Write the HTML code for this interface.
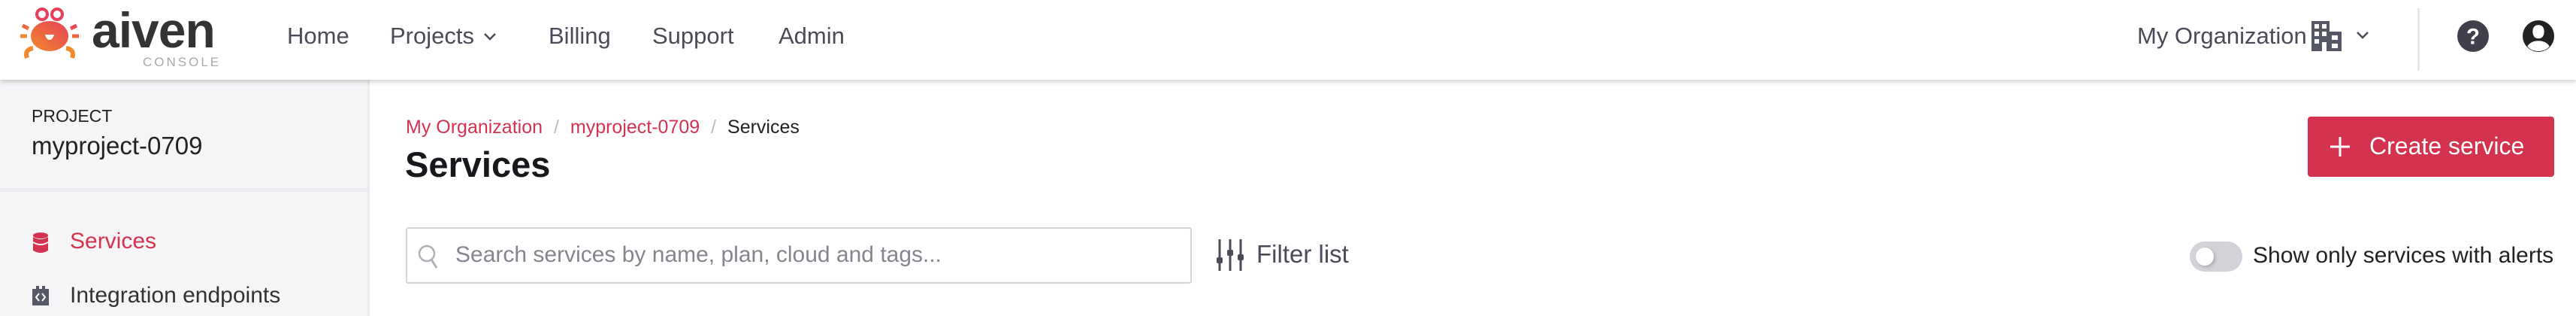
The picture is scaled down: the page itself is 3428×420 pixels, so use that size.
<!DOCTYPE html>
<html><head><meta charset="utf-8"><style>
*{margin:0;padding:0;box-sizing:border-box}
body{width:3428px;height:420px;overflow:hidden;background:#fff;font-family:"Liberation Sans",sans-serif;position:relative}
.a{position:absolute;white-space:nowrap}
.nav{font-size:31px;color:#4a4b57;top:30px}
</style></head><body>
<!-- header -->
<div class="a" style="left:0;top:0;width:3428px;height:106px;background:#fff;box-shadow:0 3px 6px rgba(0,0,0,.18);z-index:2">
 <svg class="a" style="left:26px;top:10px" width="84" height="68" viewBox="0 0 84 68">
  <defs><linearGradient id="g" x1="0" y1="1" x2="1" y2="0"><stop offset="0" stop-color="#f08a2c"/><stop offset="1" stop-color="#e8405a"/></linearGradient></defs>
  <circle cx="30" cy="9" r="7" fill="none" stroke="#e8405a" stroke-width="4"/>
  <circle cx="50" cy="9" r="7" fill="none" stroke="#e8405a" stroke-width="4"/>
  <ellipse cx="40" cy="38" rx="25" ry="20" fill="url(#g)"/>
  <path d="M34 36h12q-2 7-6 7t-6-7z" fill="#fff"/>
  <path d="M12 28l-8-4M10 38l-9 0M68 28l8-4M70 38l9 0" stroke="url(#g)" stroke-width="5"/>
  <path d="M18 54q-12 2-8 13M62 54q12 2 8 13" stroke="#f08a2c" stroke-width="6" fill="none"/>
 </svg>
 <div class="a" style="left:122px;top:2px;font-size:66px;font-weight:bold;color:#333;letter-spacing:-1px">aiven</div>
 <div class="a" style="left:190px;top:73px;font-size:17px;color:#aaa;letter-spacing:3px">CONSOLE</div>
 <div class="a nav" style="left:382px">Home</div>
 <div class="a nav" style="left:519px">Projects</div>
 <svg class="a" style="left:642px;top:42px" width="20" height="14"><path d="M3 3l7 7 7-7" stroke="#4a4b57" stroke-width="2.5" fill="none"/></svg>
 <div class="a nav" style="left:730px">Billing</div>
 <div class="a nav" style="left:868px">Support</div>
 <div class="a nav" style="left:1036px">Admin</div>
 <div class="a nav" style="left:2844px">My Organization</div>
 <svg class="a" style="left:3076px;top:28px" width="40" height="40" viewBox="0 0 40 40"><path d="M0 0h24v14h16v26H0z" fill="#565866"/><g fill="#fff"><rect x="4" y="4" width="6" height="6"/><rect x="14" y="4" width="6" height="6"/><rect x="4" y="14" width="6" height="6"/><rect x="14" y="14" width="6" height="6"/><rect x="4" y="24" width="6" height="6"/><rect x="27" y="19" width="8" height="6"/><rect x="27" y="30" width="8" height="6"/><rect x="14" y="28" width="6" height="12"/></g></svg>
 <svg class="a" style="left:3134px;top:40px" width="20" height="14"><path d="M3 3l7 7 7-7" stroke="#4a4b57" stroke-width="2.5" fill="none"/></svg>
 <div class="a" style="left:3217px;top:11px;width:3px;height:83px;background:#e6e6ea"></div>
 <svg class="a" style="left:3270px;top:27px" width="42" height="42" viewBox="0 0 40 40"><circle cx="20" cy="20" r="20" fill="#3f404b"/><text x="20" y="30" text-anchor="middle" font-family="Liberation Sans" font-weight="bold" font-size="28" fill="#fff">?</text></svg>
 <svg class="a" style="left:3357px;top:27px" width="42" height="42" viewBox="0 0 40 40"><circle cx="20" cy="20" r="20" fill="#222"/><path d="M20 6c-6 0-8 5-7 11 1 4 3 6 7 6s6-2 7-6c1-6-1-11-7-11zM6 33c3-5 8-7 14-7s11 2 14 7c-3 4-8 6-14 6S9 37 6 33z" fill="#fff"/></svg>
</div>
<!-- sidebar -->
<div class="a" style="left:0;top:106px;width:492px;height:314px;background:#f5f5f8;border-right:3px solid #ececf0"></div>
<div class="a" style="left:0;top:250px;width:492px;height:5px;background:#ececf0"></div>
<div class="a" style="left:42px;top:141px;font-size:23px;color:#222">PROJECT</div>
<div class="a" style="left:42px;top:175px;font-size:33px;color:#222">myproject-0709</div>
<svg class="a" style="left:43px;top:309px" width="22" height="28" viewBox="0 0 22 28"><ellipse cx="11" cy="4" rx="10" ry="4" fill="#d3334f"/><path d="M1 6q10 6 20 0v6q-10 6-20 0zM1 14q10 6 20 0v10q-10 6-20 0z" fill="#d3334f"/></svg>
<div class="a" style="left:93px;top:304px;font-size:30px;color:#d3334f">Services</div>
<svg class="a" style="left:43px;top:380px" width="22" height="26" viewBox="0 0 22 26"><path d="M0 4h5V0h4v4h4V0h4v4h5v22H0z" fill="#565866"/><path d="M9 10l-4 5 4 5M13 10l4 5-4 5" stroke="#fff" stroke-width="2" fill="none"/></svg>
<div class="a" style="left:93px;top:376px;font-size:30px;color:#333">Integration endpoints</div>
<!-- content -->
<div class="a" style="left:540px;top:155px;font-size:25px;color:#d3334f">My Organization <span style="color:#bbb;margin:0 8px">/</span> myproject-0709 <span style="color:#bbb;margin:0 8px">/</span> <span style="color:#222">Services</span></div>
<div class="a" style="left:539px;top:191px;font-size:47px;font-weight:bold;color:#17171c">Services</div>
<div class="a" style="left:3071px;top:155px;width:328px;height:80px;background:#d3334f;border-radius:4px"></div>
<svg class="a" style="left:3101px;top:182px" width="26" height="26"><path d="M13 0v26M0 13h26" stroke="#fff" stroke-width="3"/></svg>
<div class="a" style="left:3153px;top:176px;font-size:32px;color:#fff;font-weight:500">Create service</div>
<div class="a" style="left:540px;top:302px;width:1046px;height:75px;border:2px solid #d4d4da;border-radius:3px"></div>
<svg class="a" style="left:556px;top:324px" width="28" height="34"><circle cx="12" cy="13" r="10" stroke="#b0b0b8" stroke-width="2.5" fill="none"/><path d="M18 21l7 11" stroke="#b0b0b8" stroke-width="3"/></svg>
<div class="a" style="left:606px;top:322px;font-size:30px;color:#85858f">Search services by name, plan, cloud and tags...</div>
<svg class="a" style="left:1618px;top:318px" width="40" height="42" viewBox="0 0 40 42"><g stroke="#4a4b57" stroke-width="3"><path d="M5 0v42M19 0v42M33 0v42"/></g><g fill="#4a4b57"><rect x="1" y="24" width="8" height="8" rx="2"/><rect x="15" y="14" width="8" height="8" rx="2"/><rect x="29" y="20" width="8" height="8" rx="2"/></g></svg>
<div class="a" style="left:1672px;top:319px;font-size:33px;color:#4a4b57;font-weight:500">Filter list</div>
<div class="a" style="left:2914px;top:321px;width:70px;height:40px;border-radius:20px;background:#d2d2d8"></div>
<div class="a" style="left:2922px;top:329px;width:24px;height:24px;border-radius:50%;background:#fff;box-shadow:2px 2px 4px rgba(0,0,0,.2)"></div>
<div class="a" style="left:2998px;top:323px;font-size:30px;color:#222">Show only services with alerts</div>
</body></html>
